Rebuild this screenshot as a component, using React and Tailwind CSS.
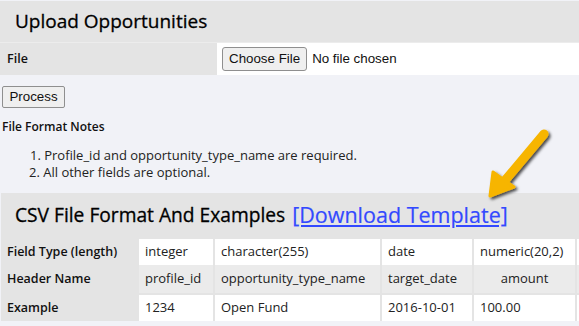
export default function App() {
  const poppins = { fontFamily: '"Open Sans", "DejaVu Sans", sans-serif' };
  const arial = { fontFamily: '"Liberation Sans", Arial, sans-serif' };
  const cell = "px-[6px] h-[26px] text-[13px] text-[#222] whitespace-nowrap";
  const lab = "w-[136px] px-[6px] text-[12.5px] font-semibold text-[#111] whitespace-nowrap flex items-center";
  return (
    <div className="relative w-[579px] h-[326px] overflow-hidden bg-[#f1f2f7]" style={poppins}>
      <div className="h-[42px] bg-[#e4e4e4] mt-px flex items-center pl-[15px] border-b border-[#ececec]">
        <h1 className="text-[19px] font-medium text-black [-webkit-text-stroke:0.3px_#000]">Upload Opportunities</h1>
      </div>
      <div className="flex h-[32px]">
        <div className="w-[217px] bg-[#e4e4e4] flex items-center pl-[7px] text-[12.5px] font-semibold text-[#111]">File</div>
        <div className="flex-1 bg-white flex items-center pl-[5px]" style={arial}>
          <button className="h-[24px] px-[6px] border border-[#8f8f8f] rounded-[3px] bg-[#efefef] text-[13.33px] text-[#111]">Choose File</button>
          <span className="ml-[5px] text-[13.33px] text-[#111]">No file chosen</span>
        </div>
      </div>
      <div className="pl-[2px] mt-[9px]" style={arial}>
        <button className="h-[22px] w-[63px] border border-[#8f8f8f] rounded-[2px] bg-[#efefef] text-[13.33px] text-[#111]">Process</button>
      </div>
      <div className="pl-[2px] mt-[10px] text-[12px] font-semibold text-[#111] h-[18px] flex items-center">File Format Notes</div>
      <ol className="mt-[11px] pl-[30px] text-[13px] text-[#222] leading-[17px]">
        <li>1. Profile_id and opportunity_type_name are required.</li>
        <li className="-ml-px">2. All other fields are optional.</li>
      </ol>
      <div className="mt-[12px] ml-px h-[45px] bg-[#e4e4e4] flex items-center pl-[14px]">
        <span className="text-[19.2px] font-medium text-black [-webkit-text-stroke:0.3px_#000]">CSV File Format And Examples</span>
        <a href="#" className="ml-[7px] text-[21.5px] font-medium text-[#3349ff] underline [-webkit-text-stroke:0.2px_#3349ff]">[Download Template]</a>
      </div>
      <div className="ml-px bg-[#e4e4e4] pt-px">
        <div className="flex gap-[2px] h-[26px]">
          <div className={lab}>Field Type (length)</div>
          <div className={`w-[74px] bg-white ${cell} flex items-center`}>integer</div>
          <div className={`w-[165px] bg-white ${cell} flex items-center`}>character(255)</div>
          <div className={`w-[90px] bg-white ${cell} flex items-center`}>date</div>
          <div className={`w-[101px] bg-white ${cell} flex items-center`}>numeric(20,2)</div>
          <div className="flex-1 bg-white"></div>
        </div>
        <div className="flex gap-[2px] h-[28px] items-center">
          <div className={lab}>Header Name</div>
          <div className={`w-[74px] bg-[#ebebeb] ${cell} flex items-center h-[28px]`}>profile_id</div>
          <div className={`w-[165px] bg-[#ebebeb] ${cell} flex items-center h-[28px]`}>opportunity_type_name</div>
          <div className={`w-[90px] bg-[#ebebeb] ${cell} flex items-center h-[28px]`}>target_date</div>
          <div className={`w-[101px] bg-[#ebebeb] ${cell} flex items-center justify-center h-[28px]`}>amount</div>
          <div className="flex-1 bg-[#ebebeb] h-[28px]"></div>
        </div>
        <div className="flex gap-[2px] h-[28px] pt-[2px]">
          <div className={lab}>Example</div>
          <div className={`w-[74px] bg-white ${cell} flex items-center`}>1234</div>
          <div className={`w-[165px] bg-white ${cell} flex items-center`}>Open Fund</div>
          <div className={`w-[90px] bg-white ${cell} flex items-center`}>2016-10-01</div>
          <div className={`w-[101px] bg-white ${cell} flex items-center`}>100.00</div>
          <div className="flex-1 bg-white"></div>
        </div>
      </div>
      <svg className="absolute left-[480px] top-[122px]" width="80" height="85" viewBox="0 0 80 85">
        <defs>
          <filter id="sh" x="-30%" y="-30%" width="160%" height="160%">
            <feDropShadow dx="2" dy="2" stdDeviation="1.5" floodColor="#000" floodOpacity="0.7" />
          </filter>
        </defs>
        <g filter="url(#sh)">
          <line x1="64" y1="12" x2="22" y2="62" stroke="#f7b500" strokeWidth="9" strokeLinecap="round" />
          <polygon points="10,74 13,50 34,65" fill="#f7b500" stroke="#f7b500" strokeWidth="3" strokeLinejoin="round" />
        </g>
      </svg>
    </div>
  );
}
